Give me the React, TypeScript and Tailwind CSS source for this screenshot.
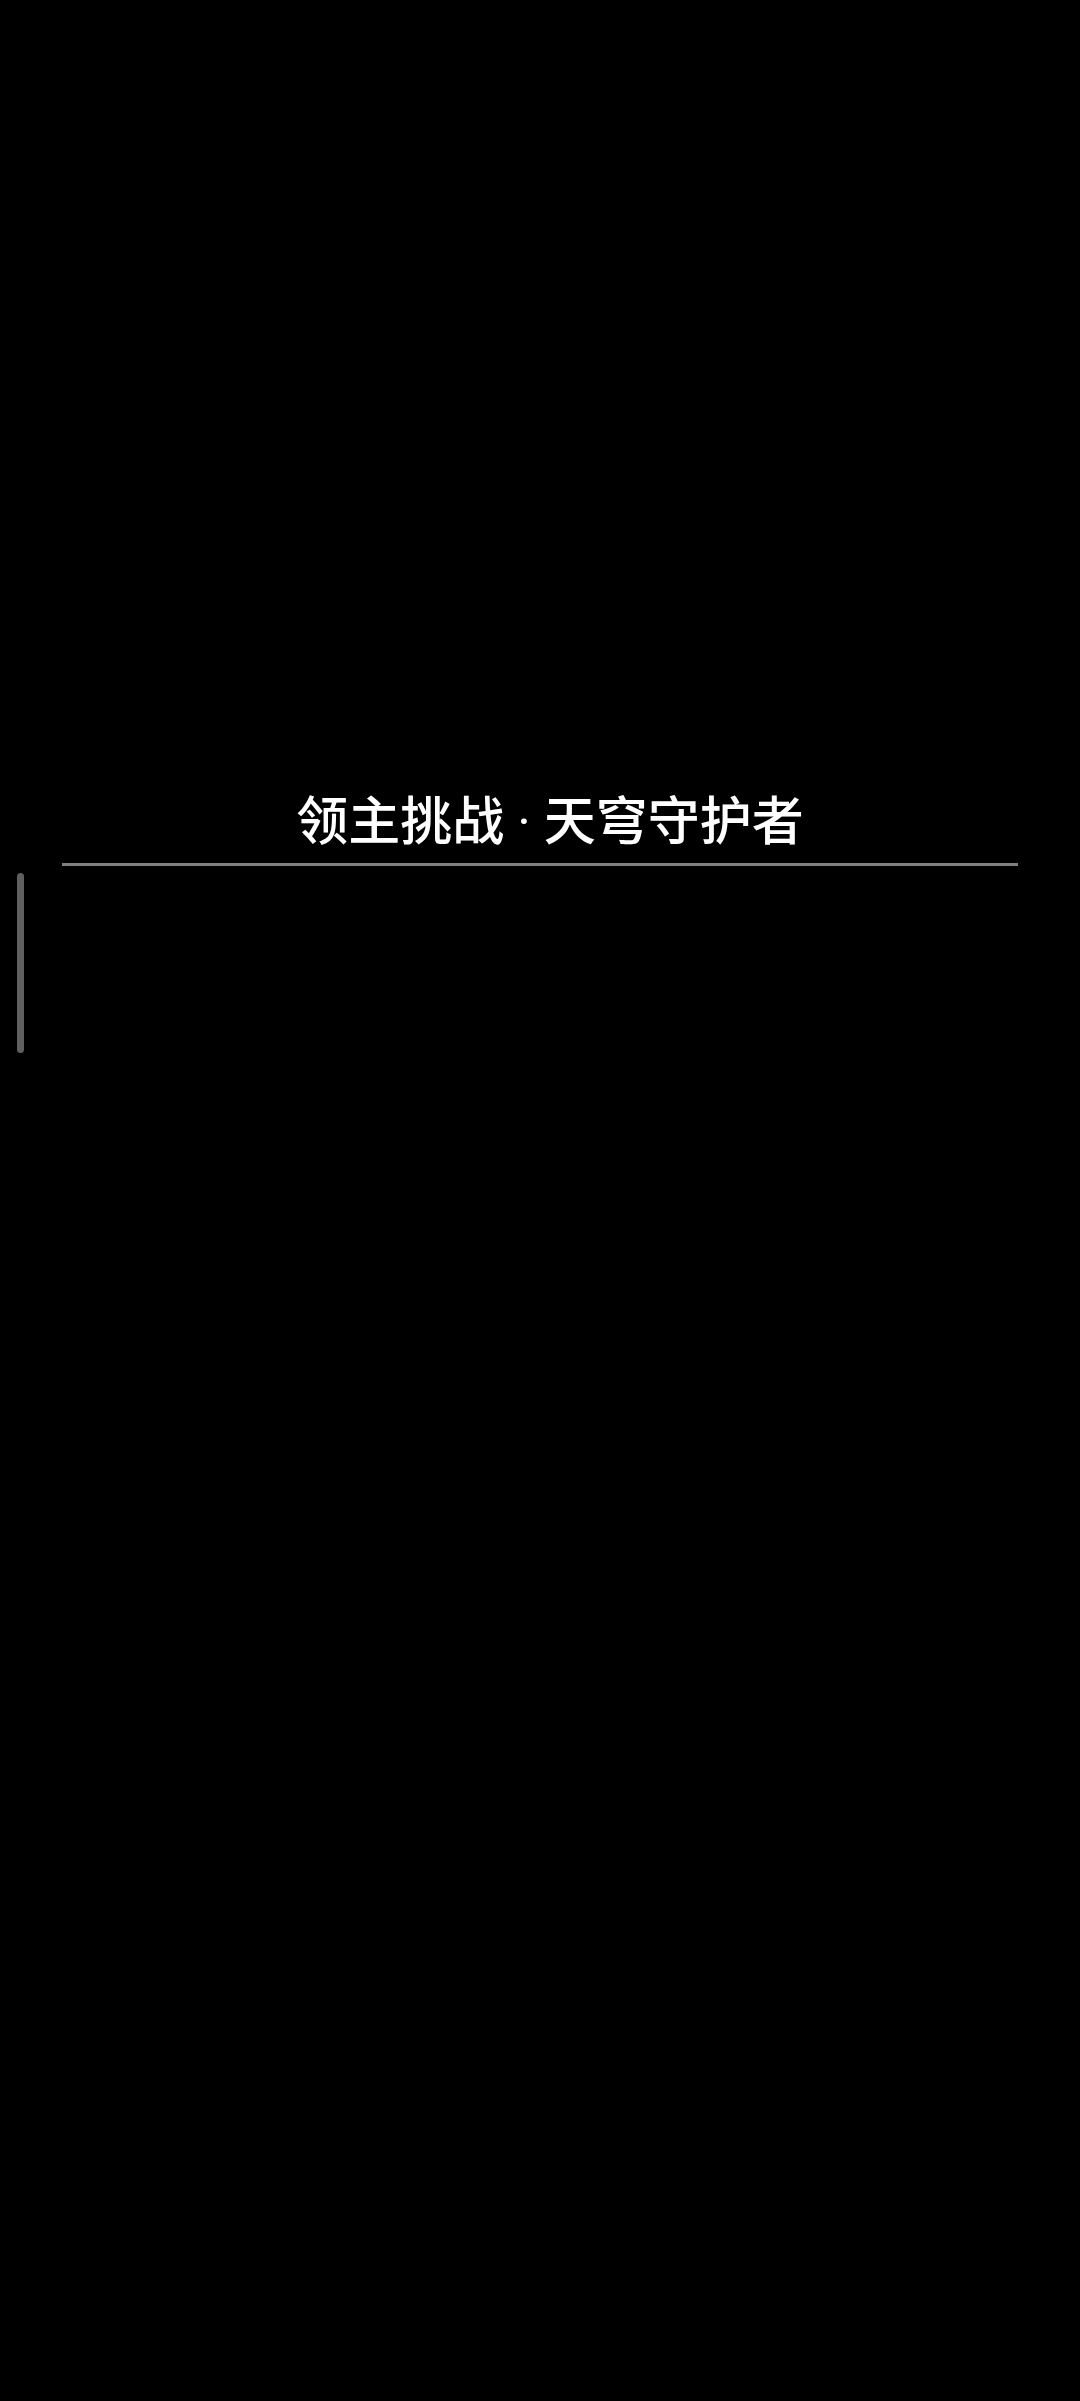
export default function App() {
  return (
    <div className="relative min-h-[2401px] w-full bg-black" style={{ fontFamily: '"Noto Sans CJK SC", "Noto Sans", sans-serif' }}>
      <div className="pt-[793px]">
        <h1 className="h-[50px] overflow-visible pl-[20px] text-center text-[52px] font-medium leading-[50px] text-white">
          领主挑战
          <span className="font-['Roboto',sans-serif] font-normal whitespace-pre leading-none"> · </span>
          天穹守护者
        </h1>
        <div className="mx-[62px] mt-[20px] h-[3px] bg-[#7f7f7f]" />
      </div>
      {/* scroll indicator */}
      <div className="absolute left-[17px] top-[873px] h-[180px] w-[7px] rounded-full bg-[#5f5f5f]" />
    </div>
  );
}
